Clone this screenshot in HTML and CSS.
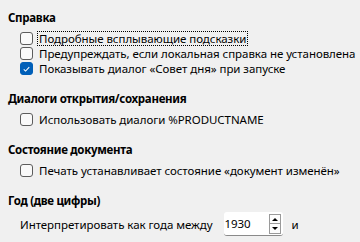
FILE: index.html
```html
<!DOCTYPE html>
<html lang="ru">
<head>
    <meta charset="UTF-8">
    <title>Общие параметры</title>
    <link rel="stylesheet" href="styles.css">
</head>
<body>
    <div class="page">
        <section class="group">
            <h3 class="group-title">Справка</h3>
            <div class="options">
                <label class="check">
                    <span class="box"></span>
                    <span class="text focused">Подробные всплывающие подсказки</span>
                </label>
                <label class="check">
                    <span class="box"></span>
                    <span class="text">Предупреждать, если локальная справка не установлена</span>
                </label>
                <label class="check">
                    <span class="box checked">
                        <svg viewBox="0 0 12 12" width="12" height="12"><path d="M3 6.3 L5 8.2 L9 3.9" fill="none" stroke="#fff" stroke-width="1.1"/></svg>
                    </span>
                    <span class="text">Показывать диалог «Совет дня» при запуске</span>
                </label>
            </div>
        </section>
        <section class="group">
            <h3 class="group-title">Диалоги открытия/сохранения</h3>
            <div class="options">
                <label class="check">
                    <span class="box"></span>
                    <span class="text">Использовать диалоги %PRODUCTNAME</span>
                </label>
            </div>
        </section>
        <section class="group">
            <h3 class="group-title">Состояние документа</h3>
            <div class="options">
                <label class="check">
                    <span class="box"></span>
                    <span class="text">Печать устанавливает состояние «документ изменён»</span>
                </label>
            </div>
        </section>
        <section class="group">
            <h3 class="group-title">Год (две цифры)</h3>
            <div class="year-row">
                <span>Интерпретировать как года между</span>
                <div class="spin">
                    <span class="spin-value">1930</span>
                    <div class="spin-buttons">
                        <span class="spin-btn up"></span>
                        <span class="spin-btn down"></span>
                    </div>
                </div>
                <span class="year-and">и</span>
            </div>
        </section>
    </div>
</body>
</html>
```

FILE: styles.css
```css
html { box-sizing: border-box; }
*, *::before, *::after { box-sizing: inherit; }
body {
    margin: 0;
    background: #f0f0f0;
    color: #000;
    font-family: 'Noto Sans', 'Open Sans', 'DejaVu Sans', sans-serif;
    font-size: 11.5px;
    letter-spacing: -0.05px;
}
.page {
    padding: 10px 8px 0 8px;
}
.group {
    margin-bottom: 15px;
}
.group-title {
    margin: 0;
    font-size: 11.5px;
    font-weight: 700;
    letter-spacing: -0.3px;
    line-height: 16px;
}
.options {
    display: flex;
    flex-direction: column;
    padding-left: 12px;
    margin-top: 5px;
}
.check {
    display: flex;
    align-items: center;
    height: 15px;
    gap: 4px;
}
.box {
    width: 13px;
    height: 13px;
    border: 1px solid #5c5c5c;
    border-radius: 3px;
    background: #f9f9f9;
    display: flex;
    align-items: center;
    justify-content: center;
    flex: none;
}
.box.checked {
    background: #005fb8;
    border-color: #005fb8;
}
.text {
    line-height: 13px;
    padding: 0 1px;
    white-space: nowrap;
    border: 1px solid transparent;
}
.focused {
    border: 1px dotted #000;
}
.year-row {
    display: flex;
    align-items: center;
    padding-left: 12px;
    margin-top: 3px;
}
.spin {
    display: flex;
    align-items: center;
    width: 59px;
    height: 24px;
    margin-left: 11px;
    background: #fff;
    border-bottom: 1px solid #8a8a8a;
    border-radius: 3px;
    padding: 0 2px 0 1px;
}
.spin-value {
    flex: 1;
}
.spin-buttons {
    display: flex;
    flex-direction: column;
    width: 12px;
    height: 20px;
    border: 1px solid #9a9a9a;
}
.spin-btn {
    flex: 1;
    position: relative;
    background: #fdfdfd;
}
.spin-btn.up {
    border-bottom: 1px solid #9a9a9a;
}
.spin-btn::after {
    content: '';
    position: absolute;
    left: 2px;
    top: 3px;
    border-left: 3px solid transparent;
    border-right: 3px solid transparent;
}
.spin-btn.up::after {
    border-bottom: 3px solid #000;
}
.spin-btn.down::after {
    border-top: 3px solid #000;
    top: 3px;
}
.year-and {
    margin-left: 9px;
}
```
